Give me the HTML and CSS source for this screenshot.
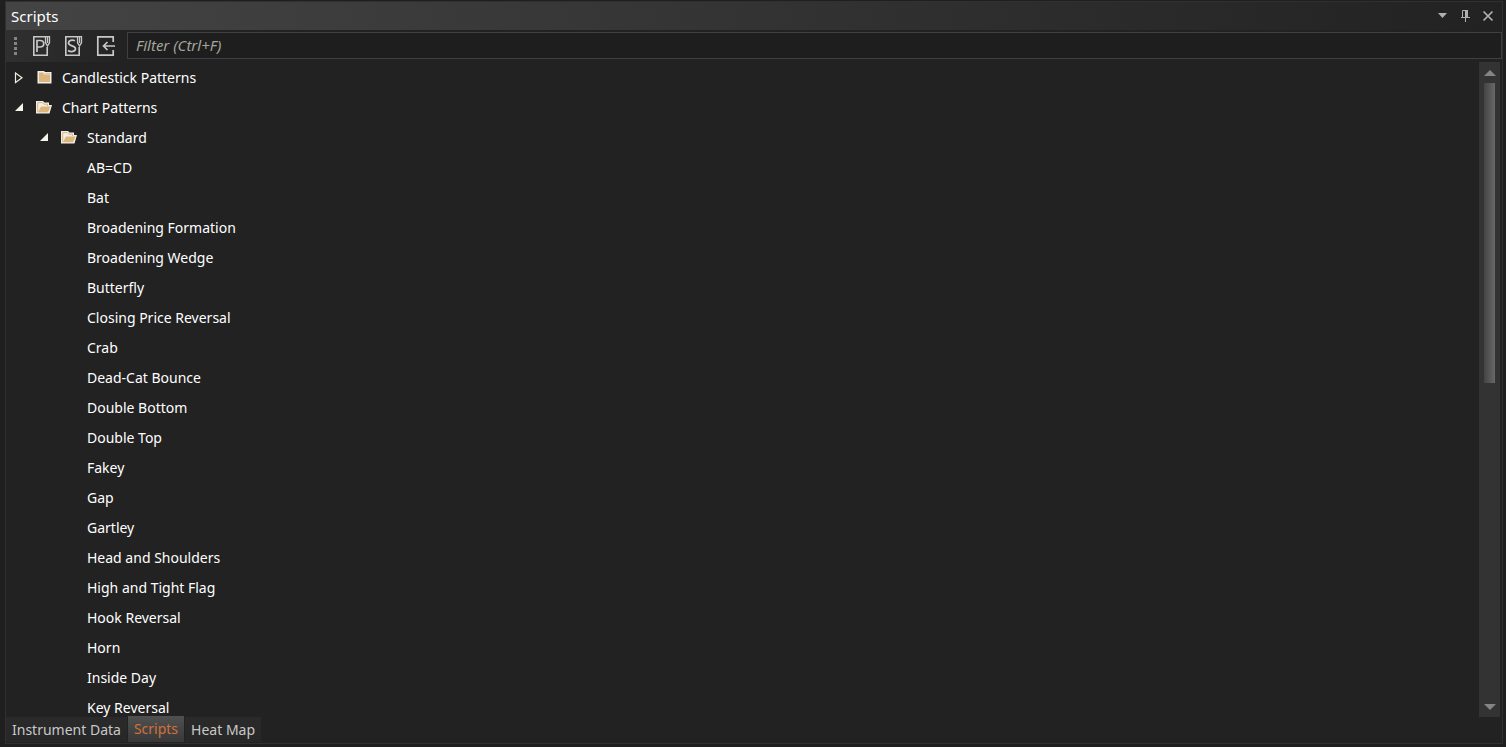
FILE: index.html
```html
<!DOCTYPE html>
<html lang="en">
<head>
    <meta charset="UTF-8">
    <meta name="viewport" content="width=device-width, initial-scale=1.0">
    <title>Scripts</title>
    <link rel="stylesheet" href="styles.css">
</head>
<body>
    <svg class="defs" aria-hidden="true">
        <symbol id="closed" viewBox="0 0 10 12">
            <path d="M1.500 1v9.500L8 5.700z" fill="none" stroke="#f0ece0" stroke-width="1.200"/>
        </symbol>
        <symbol id="open" viewBox="0 0 10 12">
            <path d="M9 1v8H1z" fill="#f5f3ea"/>
        </symbol>
        <symbol id="folder" viewBox="0 0 16 16">
            <path d="M1.500 1H8l1 1h6.500v11.500h-14z" fill="#f0eee8"/>
            <path d="M3 2.500h4L8.500 4.500H14V12H3z" fill="#dcb67a"/>
            <path d="M9 3h5v.8H9.500z" fill="#dcb67a"/>
        </symbol>
        <symbol id="folder-open" viewBox="0 0 16 16">
            <path d="M0 1h7l1.500 1.500H13V5h3l-2.500 8.500H0z" fill="#f0eee8"/>
            <path d="M1.700 12V2.600h4.600L8 4.200h3.500V6" fill="none" stroke="#dcb67a"/>
            <path d="M5 6.500h9.500L12 12.300H2z" fill="#dcb67a"/>
        </symbol>
    </svg>

    <main class="panel">
        <header class="titlebar">
            <h1>Scripts</h1>
            <button type="button" aria-label="Window position">
                <svg width="16" height="16" viewBox="0 0 16 16"><path d="M4 5h9L8.500 10z" fill="#b0b0b0"/></svg>
            </button>
            <button type="button" aria-label="Auto hide">
                <svg width="16" height="16" viewBox="0 0 16 16"><path d="M5.500 9V2.500h5V9M4 9.500h9M8.500 10v4" fill="none" stroke="#b0b0b0"/><path d="M8 2h3v7H8z" fill="#b0b0b0"/></svg>
            </button>
            <button type="button" aria-label="Close">
                <svg width="16" height="16" viewBox="0 0 16 16"><path d="M3.500 3.500l9 9M12.500 3.500l-9 9" stroke="#b0b0b0" stroke-width="1.700"/></svg>
            </button>
        </header>

        <div class="toolbar">
            <span class="grip"></span>
            <button type="button" aria-label="New PowerScript">
                <svg width="20" height="22" viewBox="0 0 20 22" fill="none" stroke="#c8c8c8">
                    <path d="M14.500 1.800H2.800v18.400h13.400V12" stroke-width="1.600"/>
                    <path d="M6 17V5.500H9c5 0 5 6.500 0 6.500H6.500" stroke-width="1.700"/>
                    <path d="M14.500 1.700h4v6l-2 3.300-2-3.300zM16.500 2v6" stroke-width="1.300"/>
                </svg>
            </button>
            <button type="button" aria-label="New script">
                <svg width="20" height="22" viewBox="0 0 20 22" fill="none" stroke="#c8c8c8">
                    <path d="M14.500 1.800H2.800v18.400h13.400V12" stroke-width="1.600"/>
                    <path d="M12 5.800C9 4.300 5.500 5.500 5.500 8c0 3.500 7 2.200 7 5.500 0 3.300-4.500 3.800-7.500 2" stroke-width="1.700"/>
                    <path d="M14.500 1.700h4v6l-2 3.300-2-3.300zM16.500 2v6" stroke-width="1.300"/>
                </svg>
            </button>
            <button type="button" aria-label="Import script">
                <svg width="20" height="22" viewBox="0 0 20 22" fill="none" stroke="#c8c8c8" stroke-width="1.700">
                    <path d="M18.200 7V1.800H2.800v18.400h15.400V15"/>
                    <path d="M20 11H8.500M12.500 7l-4 4 4 4"/>
                </svg>
            </button>
            <input class="filter" type="text" placeholder="Filter (Ctrl+F)" aria-label="Filter">
        </div>

        <div class="content">
            <ul class="tree">
                <li>
                    <button type="button" class="row" aria-expanded="false"><svg class="arrow"><use href="#closed"/></svg><svg class="icon"><use href="#folder"/></svg>Candlestick Patterns</button>
                </li>
                <li>
                    <button type="button" class="row" aria-expanded="true"><svg class="arrow"><use href="#open"/></svg><svg class="icon"><use href="#folder-open"/></svg>Chart Patterns</button>
                    <ul class="group">
                        <li>
                            <button type="button" class="row" aria-expanded="true"><svg class="arrow"><use href="#open"/></svg><svg class="icon"><use href="#folder-open"/></svg>Standard</button>
                            <ul class="leaves">
                                <li>AB=CD</li>
                                <li>Bat</li>
                                <li>Broadening Formation</li>
                                <li>Broadening Wedge</li>
                                <li>Butterfly</li>
                                <li>Closing Price Reversal</li>
                                <li>Crab</li>
                                <li>Dead-Cat Bounce</li>
                                <li>Double Bottom</li>
                                <li>Double Top</li>
                                <li>Fakey</li>
                                <li>Gap</li>
                                <li>Gartley</li>
                                <li>Head and Shoulders</li>
                                <li>High and Tight Flag</li>
                                <li>Hook Reversal</li>
                                <li>Horn</li>
                                <li>Inside Day</li>
                                <li>Key Reversal</li>
                            </ul>
                        </li>
                    </ul>
                </li>
            </ul>
            <div class="scrollbar">
                <button type="button" aria-label="Scroll up"><svg width="12" height="8" viewBox="0 0 12 8"><path d="M0 7h12L6 1z" fill="#858585"/></svg></button>
                <div class="track"><div class="thumb"></div></div>
                <button type="button" aria-label="Scroll down"><svg width="12" height="8" viewBox="0 0 12 8"><path d="M0 1h12L6 7z" fill="#858585"/></svg></button>
            </div>
        </div>

        <nav class="tabs">
            <button type="button">Instrument Data</button>
            <button type="button" class="active">Scripts</button>
            <button type="button">Heat Map</button>
        </nav>
    </main>
</body>
</html>
```
FILE: styles.css
```css
* { box-sizing: border-box; }
body { margin: 0; height: 100vh; padding: 1px 3px 3px 5px; background-color: #1f1f1f; color: #fff; font: 14px/20px "Noto Sans", "Open Sans", sans-serif; }
button { margin: 0; padding: 0; border: none; background: none; color: inherit; font: inherit; cursor: pointer; }
ul { margin: 0; padding: 0; list-style: none; }
svg { display: block; flex: none; }
.defs { position: absolute; width: 0; height: 0; }

.panel { display: flex; flex-direction: column; height: 100%; border: 1px solid #303030; background-color: #222; }

.titlebar { display: flex; align-items: center; gap: 7px; height: 28px; flex: none; padding: 0 6px 0 5px; background: linear-gradient(to right, #444, #222); }
h1 { flex: 1; margin: 0; font-size: 15px; font-weight: normal; }

.toolbar { display: flex; align-items: center; gap: 12px; height: 32px; flex: none; background: linear-gradient(to right, #303030, #222 120px); }
.grip { width: 3px; height: 18px; margin: 0 2px 0 8px; background: repeating-linear-gradient(#858585 0 3px, transparent 3px 5px); }
.filter { flex: 1; min-width: 0; height: 27px; margin-bottom: 2px; padding: 0 8px; border: 1px solid #3f3f46; border-radius: 0; background-color: #1e1e1e; color: #fff; font: inherit; font-size: 15px; outline: none; }
.filter::placeholder { color: #a5a59c; font-style: italic; opacity: 1; }

.content { display: flex; flex: 1; min-height: 0; padding-right: 2px; }
.tree { flex: 1; padding-top: 1px; overflow: hidden; }
.row { display: flex; align-items: center; width: 100%; height: 30px; padding-left: 8px; text-align: left; }
.arrow { width: 10px; height: 12px; margin-right: 12px; }
.icon { width: 16px; height: 16px; margin-right: 10px; }
.group { padding-left: 25px; }
.leaves li { height: 30px; padding: 5px 0 5px 56px; }

.scrollbar { display: flex; flex-direction: column; width: 21px; background-color: #333; }
.scrollbar button { display: flex; align-items: center; justify-content: center; height: 21px; }
.track { flex: 1; padding: 0 5px; }
.thumb { height: 49%; background: linear-gradient(to right, #444, #686868); }

.tabs { display: flex; align-items: flex-end; gap: 1px; height: 26px; flex: none; padding-bottom: 1px; }
.tabs button { height: 25px; padding: 0 6px; background: linear-gradient(#2a2a2a, #272727); color: #c8c8c8; }
.tabs .active { height: 26px; background: linear-gradient(#505050, #383838); color: #d2703a; }
```
